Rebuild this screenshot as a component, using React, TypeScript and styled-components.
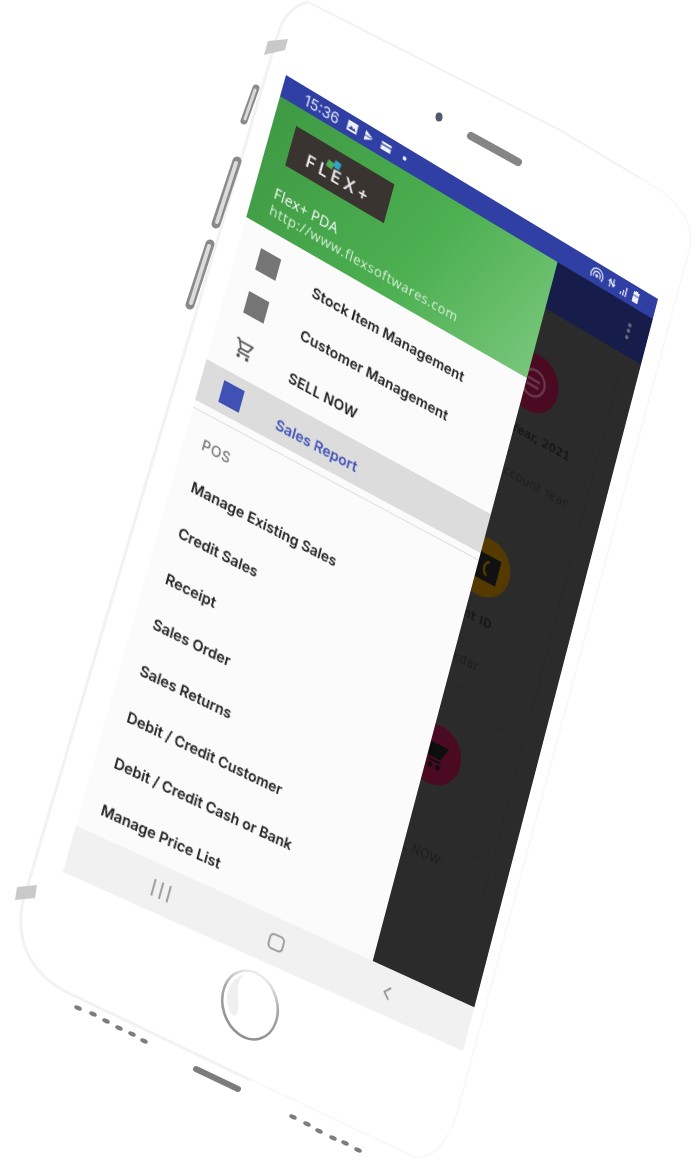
import React from 'react';
import styled, { createGlobalStyle } from 'styled-components';
import { MdOutlineShoppingCart } from 'react-icons/md';

type Pt = [number, number];

const SCREEN_W = 436;
const SCREEN_H = 800;

// homography from the flat screen rectangle to the tilted quad of the photo
function quadToMatrix(w: number, h: number, p0: Pt, p1: Pt, p2: Pt, p3: Pt) {
  const dx1 = p1[0] - p2[0];
  const dx2 = p3[0] - p2[0];
  const sx = p0[0] - p1[0] + p2[0] - p3[0];
  const dy1 = p1[1] - p2[1];
  const dy2 = p3[1] - p2[1];
  const sy = p0[1] - p1[1] + p2[1] - p3[1];
  const den = dx1 * dy2 - dx2 * dy1;
  const g = (sx * dy2 - dx2 * sy) / den;
  const k = (dx1 * sy - sx * dy1) / den;
  const a = p1[0] - p0[0] + g * p1[0];
  const b = p3[0] - p0[0] + k * p3[0];
  const d = p1[1] - p0[1] + g * p1[1];
  const e = p3[1] - p0[1] + k * p3[1];
  return `matrix3d(${a / w},${d / w},0,${g / w},${b / h},${e / h},0,${k / h},0,0,1,0,${p0[0]},${p0[1]},0,1)`;
}

const SCREEN_MATRIX = quadToMatrix(SCREEN_W, SCREEN_H, [286, 75], [658, 299], [463, 1051], [63, 872]);

const GlobalStyle = createGlobalStyle`
  html, body { margin: 0; padding: 0; background: #fff; }
  body { font-family: "Inter", "Liberation Sans", sans-serif; }
`;

const Stage = styled.div`
  position: relative;
  width: 700px;
  height: 1168px;
  overflow: hidden;
  background: #fff;
`;

const PhoneBody = styled.svg`
  position: absolute;
  inset: 0;
  width: 700px;
  height: 1168px;
  filter: blur(0.5px);
`;

const Screen = styled.div`
  position: absolute;
  left: 0;
  top: 0;
  width: ${SCREEN_W}px;
  height: ${SCREEN_H}px;
  display: flex;
  flex-direction: column;
  overflow: hidden;
  transform-origin: 0 0;
  transform: ${SCREEN_MATRIX};
  filter: blur(0.4px);
  background: #2b2b2b;
`;

const StatusBar = styled.div`
  height: 22px;
  flex: none;
  background: #303fa3;
  color: #dfe3f7;
  display: flex;
  align-items: center;
  padding: 0 20px 0 24px;
  font-size: 15px;
`;

const StatusLeft = styled.div`
  display: flex;
  align-items: center;
  gap: 7px;
  flex: 1;
`;

const StatusTime = styled.span`
  margin-right: 2px;
`;

const StatusRight = styled.div`
  display: flex;
  align-items: center;
  gap: 5px;
`;

const Dot = styled.i`
  width: 4px;
  height: 4px;
  border-radius: 50%;
  margin-left: 6px;
  background: #e8ebfa;
`;

const Main = styled.div`
  position: relative;
  flex: 1;
  display: flex;
  flex-direction: column;
  min-height: 0;
`;

const AppBar = styled.div`
  height: 50px;
  flex: none;
  background: #161d4b;
  display: flex;
  align-items: center;
  justify-content: flex-end;
  padding-right: 21px;
`;

const Kebab = styled.div`
  display: flex;
  flex-direction: column;
  gap: 2.5px;
  & > i {
    width: 4px;
    height: 4px;
    background: #666a80;
    border-radius: 50%;
  }
`;

const CardGrid = styled.div`
  display: grid;
  grid-template-columns: 1fr 168px;
  gap: 18px 10px;
  padding: 21px 20px 0 20px;
`;

const Card = styled.div`
  height: 178px;
  box-sizing: border-box;
  border: 1px solid #272727;
  border-radius: 3px;
  display: flex;
  flex-direction: column;
  align-items: center;
  padding: 25px 10px 0 0;
`;

const Circle = styled.div<{ $bg: string }>`
  width: 58px;
  height: 58px;
  border-radius: 50%;
  background: ${(p) => p.$bg};
  display: flex;
  align-items: center;
  justify-content: center;
  flex: none;
`;

const CardTitle = styled.div<{ $trim?: number }>`
  height: 20px;
  margin-top: 12px;
  margin-right: ${(p) => p.$trim ?? 0}px;
  font-size: 12px;
  font-weight: 700;
  line-height: 20px;
  color: #181818;
  white-space: nowrap;
  font-family: "DejaVu Sans", sans-serif;
`;

const CardRule = styled.div`
  align-self: stretch;
  margin-right: -10px;
  height: 1px;
  margin-top: 14px;
  background: #272727;
`;

const CardSub = styled.div`
  margin-top: 12px;
  font-size: 13px;
  color: #1d1d1d;
  white-space: nowrap;
  font-family: "DejaVu Sans", sans-serif;
`;

const Drawer = styled.div`
  position: absolute;
  left: 0;
  top: 0;
  bottom: 0;
  width: 319px;
  background: #fbfbfb;
  display: flex;
  flex-direction: column;
`;

const DrawerHeader = styled.div`
  height: 125px;
  flex: none;
  box-sizing: border-box;
  padding: 18px 0 0 20px;
  color: #fff;
  background: linear-gradient(115deg, #3f9944 0%, #4caf50 55%, #78c67b 100%);
`;

const LogoBox = styled.div`
  position: relative;
  width: 110px;
  height: 41px;
  margin-left: 3px;
  box-sizing: border-box;
  padding-top: 8px;
  background: #3a3431;
  display: flex;
  align-items: center;
  justify-content: center;
  font-size: 17px;
  letter-spacing: 4px;
  font-weight: 600;
  color: #e8e8e8;
`;

const LogoChip = styled.i<{ $c: string; $x: number; $y: number }>`
  position: absolute;
  left: ${(p) => p.$x}px;
  top: ${(p) => p.$y}px;
  width: 7px;
  height: 7px;
  background: ${(p) => p.$c};
  transform: rotate(10deg);
`;

const BrandName = styled.div`
  margin-top: 21px;
  height: 18px;
  line-height: 18px;
  font-size: 14.5px;
  letter-spacing: 0.3px;
  font-family: "Open Sans", sans-serif;
`;

const BrandUrl = styled.div`
  height: 16px;
  line-height: 16px;
  font-size: 14px;
  letter-spacing: 0.55px;
  color: #d8efd9;
  font-family: "Open Sans", sans-serif;
  white-space: nowrap;
`;

const TopList = styled.div`
  padding-top: 5px;
  flex: none;
`;

const IconRow = styled.div<{ $active?: boolean }>`
  height: ${(p) => (p.$active ? 41 : 44)}px;
  margin-top: ${(p) => (p.$active ? 8 : 0)}px;
  display: flex;
  align-items: flex-start;
  padding-left: 22px;
  background: ${(p) => (p.$active ? '#dcdcdc' : 'transparent')};
`;

const IconBox = styled.div<{ $active?: boolean }>`
  width: 22px;
  height: 22px;
  margin-right: 38px;
  margin-top: ${(p) => (p.$active ? 10 : 15)}px;
  flex: none;
  display: flex;
  align-items: center;
  justify-content: center;
`;

const Swatch = styled.div<{ $c: string }>`
  width: 22px;
  height: 22px;
  background: ${(p) => p.$c};
`;

const IconLabel = styled.span<{ $active?: boolean }>`
  font-size: 14.5px;
  line-height: 18px;
  font-weight: 600;
  letter-spacing: 0.1px;
  margin-top: ${(p) => (p.$active ? 15 : 19)}px;
  color: ${(p) => (p.$active ? '#3f51b5' : '#1f1f1f')};
  white-space: nowrap;
`;

const Divider = styled.div`
  height: 1px;
  margin-top: 7px;
  background: #dedede;
  flex: none;
`;

const SectionLabel = styled.div`
  height: 47px;
  flex: none;
  display: flex;
  align-items: center;
  padding: 7px 0 0 18px;
  box-sizing: border-box;
  font-size: 14px;
  font-weight: 500;
  letter-spacing: 0.6px;
  color: #757575;
`;

const MenuItem = styled.div`
  height: 45.7px;
  flex: none;
  display: flex;
  align-items: center;
  padding-left: 19px;
  font-size: 14.5px;
  font-weight: 600;
  color: #1f1f1f;
  white-space: nowrap;
`;

const NavBar = styled.div`
  height: 45px;
  flex: none;
  background: #f1f1f1;
  display: flex;
  align-items: center;
  justify-content: space-between;
  padding: 0 83px 0 84px;
`;

const NavIcon = styled.svg`
  width: 22px;
  height: 22px;
  display: block;
`;

const drawerTop = ['Stock Item Management', 'Customer Management'];
const posItems = [
  'Manage Existing Sales',
  'Credit Sales',
  'Receipt',
  'Sales Order',
  'Sales Returns',
  'Debit / Credit Customer',
  'Debit / Credit Cash or Bank',
  'Manage Price List',
];
const speakerLeft: Pt[] = [[78, 1008], [93, 1014], [106, 1021], [119, 1028], [132, 1034], [144, 1041]];
const speakerRight: Pt[] = [[293, 1117], [307, 1124], [319, 1131], [333, 1138], [345, 1143], [358, 1150]];

function Phone() {
  return (
    <PhoneBody viewBox="0 0 700 1168">
      <defs>
        <linearGradient id="ring" x1="0.85" y1="0" x2="0.2" y2="0.9">
          <stop offset="0" stopColor="#ffffff" />
          <stop offset="0.45" stopColor="#a8a8a8" />
          <stop offset="1" stopColor="#8f8f8f" />
        </linearGradient>
      </defs>
      <path
        d="M308 2 C292 6 282 18 277 37 L22 905 C16 945 32 978 77 997 L410 1155 C435 1165 450 1135 457 1113 L690 247 C694 225 680 205 660 190 L560 130 Z"
        fill="#fff"
        stroke="#f7f7f7"
        strokeWidth="1.5"
      />
      <path d="M308 2 C292 6 282 18 277 37 L22 905 C16 945 32 978 77 997 L250 1080" fill="none" stroke="#f2f2f2" strokeWidth="3" />
      <path d="M308 2 L560 130 L640 178" fill="none" stroke="#f1f1f1" strokeWidth="1.5" />
      <path d="M264 55 L268 41 L288 39 L285 50 Z" fill="#c9c9c9" />
      <path d="M15 900 L17 887 L37 885 L35 898 Z" fill="#c9c9c9" />
      <path d="M256 88 L244 121" stroke="#8a8a8a" strokeWidth="7" strokeLinecap="round" />
      <path d="M255 90 L245 119" stroke="#dadada" strokeWidth="3" strokeLinecap="round" />
      <path d="M237 161 L216 224" stroke="#8a8a8a" strokeWidth="9" strokeLinecap="round" />
      <path d="M236 163 L217 222" stroke="#dcdcdc" strokeWidth="4" strokeLinecap="round" />
      <path d="M210 244 L190 305" stroke="#8a8a8a" strokeWidth="9" strokeLinecap="round" />
      <path d="M209 246 L191 303" stroke="#dcdcdc" strokeWidth="4" strokeLinecap="round" />
      <ellipse cx="439" cy="117" rx="3.5" ry="4.5" fill="#50596e" />
      <path d="M471 136 L518 162" stroke="#858585" strokeWidth="8" strokeLinecap="round" />
      <ellipse cx="250" cy="1005" rx="27" ry="35" transform="rotate(-17 250 1005)" fill="#fff" stroke="url(#ring)" strokeWidth="2.6" />
      <path d="M246 973 C236 980 238 992 238 1000 C240 1012 236 1018 232 1015 C224 1000 224 982 246 973 Z" fill="#efefef" />
      <path d="M196 1069 L238 1089" stroke="#7c7c7c" strokeWidth="6" strokeLinecap="round" />
      {[...speakerLeft, ...speakerRight].map(([x, y]) => (
        <ellipse key={x} cx={x} cy={y} rx="4" ry="2.2" transform={`rotate(25 ${x} ${y})`} fill="#7d7d7d" />
      ))}
    </PhoneBody>
  );
}

function StatusIcons() {
  return (
    <StatusLeft>
      <StatusTime>15:36</StatusTime>
      <svg width="12" height="12" viewBox="0 0 12 12">
        <rect x="0.5" y="1" width="11" height="10" fill="#eef0fb" />
        <path d="M2 9 L5 5 L7 7.5 L8.5 6 L10 9 Z" fill="#303fa3" />
      </svg>
      <svg width="12" height="12" viewBox="0 0 12 12">
        <path d="M1 1 L11 6 L1 11 Z" fill="#eef0fb" />
        <path d="M1 6 L11 6" stroke="#303fa3" strokeWidth="1" />
      </svg>
      <svg width="12" height="12" viewBox="0 0 12 12">
        <rect x="0.5" y="2" width="11" height="8" fill="#eef0fb" />
        <path d="M0.5 5 L11.5 5" stroke="#303fa3" strokeWidth="1.4" />
      </svg>
      <Dot />
    </StatusLeft>
  );
}

function StatusTray() {
  return (
    <StatusRight>
      <svg width="16" height="14" viewBox="0 0 16 14" fill="none" stroke="#e6e9f8" strokeWidth="1.3">
        <path d="M2 12 A7 7 0 1 1 14 12" />
        <path d="M4.5 10.5 A4 4 0 1 1 11.5 10.5" />
        <circle cx="8" cy="9" r="1" fill="#e6e9f8" />
      </svg>
      <svg width="10" height="12" viewBox="0 0 10 12" fill="none" stroke="#e6e9f8" strokeWidth="1.3">
        <path d="M3 11 V4 M1 6 L3 3 L5 6" />
        <path d="M7 1 V8 M5 6 L7 9 L9 6" />
      </svg>
      <svg width="10" height="11" viewBox="0 0 10 11">
        <path d="M1 8h1.4v3H1zM4 5h1.4v6H4zM7 1h1.4v10H7z" fill="#e6e9f8" />
      </svg>
      <svg width="9" height="12" viewBox="0 0 9 12">
        <path d="M3 0h3v1h2v11H1V1h2z" fill="#eef0fb" />
        <path d="M1 5h7" stroke="#303fa3" strokeWidth="1" />
      </svg>
    </StatusRight>
  );
}

function DimCards() {
  return (
    <CardGrid>
      <Card />
      <Card>
        <Circle $bg="#4a0a22">
          <svg width="36" height="36" viewBox="0 0 36 36" fill="none" stroke="#6b3a4b" strokeWidth="2.4">
            <circle cx="18" cy="18" r="13" />
            <path d="M11 15h14M11 21h14" />
          </svg>
        </Circle>
        <CardTitle $trim={18}>Financial Year, 2021</CardTitle>
        <CardRule />
        <CardSub>Current Account Year</CardSub>
      </Card>
      <Card />
      <Card>
        <Circle $bg="#553a00">
          <svg width="36" height="30" viewBox="0 0 36 30">
            <rect x="2" y="2" width="32" height="26" fill="#111" />
            <path d="M22 8 C16 10 16 20 22 22" fill="none" stroke="#553a00" strokeWidth="2.6" />
          </svg>
        </Circle>
        <CardTitle $trim={12}>Client ID</CardTitle>
        <CardRule />
        <CardSub>Sikdar</CardSub>
      </Card>
      <Card />
      <Card>
        <Circle $bg="#4a0a22">
          <svg width="34" height="34" viewBox="0 0 34 34">
            <path d="M4 6 H30 L24 20 H10 Z" fill="#0e0e0e" />
            <path d="M11 23 H25" stroke="#0e0e0e" strokeWidth="2" />
            <circle cx="14" cy="28" r="2.6" fill="#0e0e0e" />
            <circle cx="23" cy="28" r="2.6" fill="#0e0e0e" />
          </svg>
        </Circle>
        <CardTitle />
        <CardRule />
        <CardSub>SELL NOW</CardSub>
      </Card>
    </CardGrid>
  );
}

function DrawerPanel() {
  return (
    <Drawer>
      <DrawerHeader>
        <LogoBox>
          FLEX+
          <LogoChip $c="#4caf50" $x={39} $y={13} />
          <LogoChip $c="#2ea3c4" $x={46} $y={10} />
        </LogoBox>
        <BrandName>Flex+ PDA</BrandName>
        <BrandUrl>http://www.flexsoftwares.com</BrandUrl>
      </DrawerHeader>
      <TopList>
        {drawerTop.map((label) => (
          <IconRow key={label}>
            <IconBox>
              <Swatch $c="#757575" />
            </IconBox>
            <IconLabel>{label}</IconLabel>
          </IconRow>
        ))}
        <IconRow>
          <IconBox>
            <MdOutlineShoppingCart size={26} color="#5a5a5a" />
          </IconBox>
          <IconLabel>SELL NOW</IconLabel>
        </IconRow>
        <IconRow $active>
          <IconBox $active>
            <Swatch $c="#3f51b5" />
          </IconBox>
          <IconLabel $active>Sales Report</IconLabel>
        </IconRow>
      </TopList>
      <Divider />
      <SectionLabel>POS</SectionLabel>
      {posItems.map((item) => (
        <MenuItem key={item}>{item}</MenuItem>
      ))}
    </Drawer>
  );
}

export default function App() {
  return (
    <Stage>
      <GlobalStyle />
      <Phone />
      <Screen>
        <StatusBar>
          <StatusIcons />
          <StatusTray />
        </StatusBar>
        <Main>
          <AppBar>
            <Kebab>
              <i />
              <i />
              <i />
            </Kebab>
          </AppBar>
          <DimCards />
          <DrawerPanel />
        </Main>
        <NavBar>
          <NavIcon viewBox="0 0 22 22" fill="none" stroke="#8a8a8a" strokeWidth="1.6">
            <path d="M3 3v16M11 3v16M19 3v16" />
          </NavIcon>
          <NavIcon viewBox="0 0 22 22" fill="none" stroke="#8a8a8a" strokeWidth="1.6">
            <rect x="3" y="4" width="15" height="14" rx="4" />
          </NavIcon>
          <NavIcon viewBox="0 0 22 22" fill="none" stroke="#8a8a8a" strokeWidth="1.6">
            <path d="M14 5 L8 11 L14 17" />
          </NavIcon>
        </NavBar>
      </Screen>
    </Stage>
  );
}
